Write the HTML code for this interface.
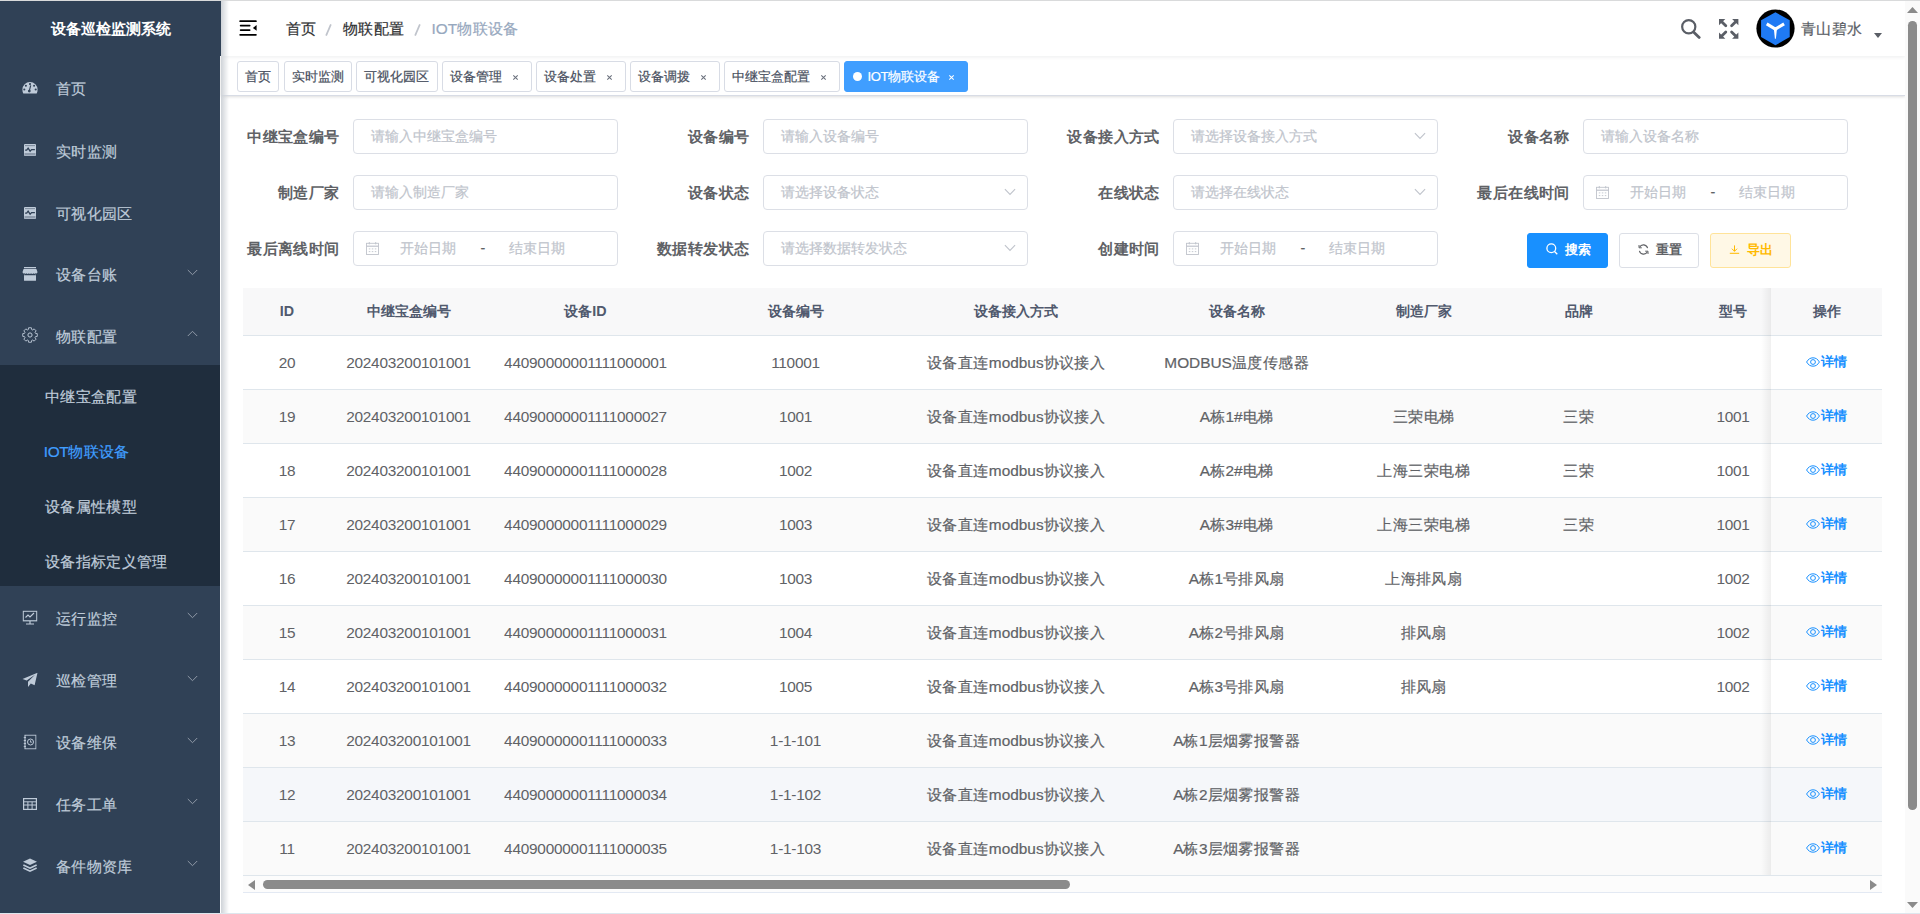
<!DOCTYPE html>
<html><head><meta charset="utf-8">
<style>
*{box-sizing:border-box;margin:0;padding:0}
html,body{width:1920px;height:914px;overflow:hidden;background:#fff;font-family:"Liberation Sans",sans-serif;-webkit-font-smoothing:antialiased}
.abs{position:absolute}
#topline{position:absolute;left:0;top:0;width:1920px;height:1px;background:#d9dadb;z-index:50}
#bottomline{position:absolute;left:0;top:913px;width:1920px;height:1px;background:#dde7ee;z-index:50}
#side{position:absolute;left:0;top:0;width:220px;height:913px;background:#304156;z-index:10;overflow:hidden}
#shadow{position:absolute;left:221px;top:0;width:8px;height:914px;background:linear-gradient(to right,#cfd3d8,rgba(255,255,255,0));z-index:9}
.logo{position:absolute;left:0;top:1px;width:221px;height:55px;line-height:55px;text-align:center;color:#fff;font-weight:bold;font-size:15.4px}
.mt{position:absolute;left:56px;height:61.6px;line-height:61.6px;font-size:15.4px;color:#bfcbd9;white-space:nowrap}
.ic{position:absolute;left:30px;width:0;height:0}
.ic svg{position:absolute;left:0;top:0;transform:translate(-50%,-50%);display:block}
.chev{position:absolute;left:186.5px}
.chev svg{display:block}
svg{display:block}
.subbg{position:absolute;left:0;width:220px;background:#1f2d3d}
.si{position:absolute;left:0;width:220px;height:55px;line-height:55px;padding-left:45px;font-size:15.4px;color:#bfcbd9}
.si.act{color:#409eff}
#navbar{position:absolute;left:221px;top:1px;width:1684px;height:55px;background:#fff;box-shadow:0 1px 4px rgba(0,21,41,.08);z-index:3}
.bc{position:absolute;top:0;line-height:56px;font-size:15.4px;color:#303133;white-space:nowrap}
.bc.sep{color:#c0c4cc;font-weight:bold}
.bc.last{color:#97a8be}
#tags{position:absolute;left:221px;top:56px;width:1684px;height:39.5px;background:#fff;border-bottom:1px solid #d8dce5;box-shadow:0 1px 3px 0 rgba(0,0,0,.12),0 0 3px 0 rgba(0,0,0,.04);z-index:2}
.tag{position:absolute;top:61.2px;height:30.5px;border:1px solid #d8dce5;border-radius:3px;background:#fff;color:#495060;font-size:13.2px;line-height:29.8px;padding-left:7.1px;white-space:nowrap;z-index:4}
.tag .x{position:absolute;font-size:11px;color:#495060}
.tag.act{background:#409eff;border-color:#409eff;color:#fff}
.lbl{position:absolute;font-size:15.4px;font-weight:bold;color:#606266;text-align:right;line-height:35px;white-space:nowrap;letter-spacing:0.4px}
.inp{position:absolute;height:35px;border:1px solid #dcdfe6;border-radius:4px;background:#fff}
.ph{position:absolute;top:0;line-height:33px;font-size:14.3px;color:#c0c4cc;white-space:nowrap}
.btn{position:absolute;top:233px;height:34.7px;border-radius:3px;font-size:13.2px;line-height:32.2px;white-space:nowrap;font-weight:bold}
#table{position:absolute;left:243px;top:288px;width:1639px;height:605px;overflow:hidden;background:#fff}
.thead{position:absolute;left:0;top:0;width:1639px;height:48.4px;background:#f8f8f9;border-bottom:1px solid #dfe6ec}
.th{position:absolute;top:0;height:47.4px;line-height:46px;text-align:center;font-size:14.3px;font-weight:bold;color:#515a6e;white-space:nowrap}
.tr{position:absolute;left:0;width:1639px;height:54px;border-bottom:1px solid #dfe6ec}
.td{position:absolute;top:0;height:53px;line-height:53px;text-align:center;font-size:15.4px;color:#606266;white-space:nowrap}
.td.dg{letter-spacing:-0.25px}
.td.cj,.mt,.si,.bc,.tag,.ph{-webkit-text-stroke:0.2px currentColor}
.mt,.si,.bc{letter-spacing:0.35px}
.td.cj{letter-spacing:0.45px;text-indent:0.45px}
.lt{letter-spacing:0}
.fx{position:absolute;left:1528.4px;top:0;width:110.6px;height:53px;line-height:52.6px;font-weight:bold;text-align:center;font-size:13.2px;color:#1890ff;white-space:nowrap}
.eye{display:inline-block;vertical-align:middle;margin-right:1px;position:relative;top:-0.8px}
.eye svg{display:block}
.fxh{position:absolute;left:1528.4px;top:0;width:110.6px;height:48.4px;line-height:46px;text-align:center;font-size:14.3px;font-weight:bold;color:#515a6e;background:#f8f8f9;border-bottom:1px solid #dfe6ec}
#fxshadow{position:absolute;left:1518.4px;top:0;width:10px;height:587.4px;background:linear-gradient(to right,rgba(0,0,0,0),rgba(0,0,0,.06))}
.hscroll{position:absolute;left:0;top:587.4px;width:1639px;height:18px;background:#fcfcfc;border-top:1px solid #dfe6ec;border-bottom:1px solid #e3e9f3}
#vscroll{position:absolute;left:1905px;top:1px;width:15px;height:912px;background:#fafafa;z-index:20}
</style></head><body>
<div id="topline"></div>
<div id="bottomline"></div>
<div id="side">
<div class="logo">设备巡检监测系统</div>
<div class="subbg" style="top:364.7px;height:221.1px"></div>
<div class="mt" style="top:58.0px">首页</div><div class="ic" style="top:87.5px"><svg width="16" height="13" viewBox="0 0 16 13"><path d="M8 0.5A7.6 7.6 0 0 0 0.4 8.1c0 1.6.3 2.8.9 3.9h13.4c.6-1.1.9-2.3.9-3.9A7.6 7.6 0 0 0 8 0.5z" fill="#bfcbd9"/><circle cx="8" cy="2.6" r="1.05" fill="#304156"/><circle cx="3.9" cy="4.2" r="1.05" fill="#304156"/><circle cx="12.1" cy="4.2" r="1.05" fill="#304156"/><circle cx="2.3" cy="8" r="1.05" fill="#304156"/><circle cx="13.7" cy="8" r="1.05" fill="#304156"/><path d="M8.7 3.8 L7.4 9" stroke="#304156" stroke-width="1.1"/><circle cx="7.3" cy="9.6" r="1.4" fill="#304156"/></svg></div>
<div class="mt" style="top:120.9px">实时监测</div><div class="ic" style="top:150.4px"><svg width="13" height="13" viewBox="0 0 13 13"><rect x="0.5" y="0.5" width="12" height="12" rx="1" fill="#bfcbd9"/><rect x="1.5" y="1.8" width="10" height="0.8" fill="#304156" opacity="0.6"/><path d="M1.6 6.6h1.6l1.4-2 2 3.1 1.5-1.7h3.3" stroke="#304156" stroke-width="1.25" fill="none"/><rect x="1" y="9.5" width="11" height="2.5" fill="#8d9aab"/></svg></div>
<div class="mt" style="top:183.0px">可视化园区</div><div class="ic" style="top:212.5px"><svg width="13" height="13" viewBox="0 0 13 13"><rect x="0.5" y="0.5" width="12" height="12" rx="1" fill="#bfcbd9"/><rect x="1.5" y="1.8" width="10" height="0.8" fill="#304156" opacity="0.6"/><path d="M1.6 6.6h1.6l1.4-2 2 3.1 1.5-1.7h3.3" stroke="#304156" stroke-width="1.25" fill="none"/><rect x="1" y="9.5" width="11" height="2.5" fill="#8d9aab"/></svg></div>
<div class="mt" style="top:244.3px">设备台账</div><div class="ic" style="top:273.8px"><svg width="16" height="14" viewBox="0 0 16 14"><rect x="2" y="0" width="12" height="1.3" fill="#bfcbd9"/><path d="M1.6 1.9H14.4L15.4 4.8V5.4Q14.9 7 13.4 6.2 12.6 7.4 11.3 6.2 10.4 7.6 9 6.2 8 7.6 6.9 6.2 5.6 7.6 4.7 6.2 3.4 7.4 2.6 6.2 1.1 7 0.6 5.4V4.8z" fill="#bfcbd9"/><path d="M2 8.2H14V13.2Q14 13.8 13.4 13.8H2.6Q2 13.8 2 13.2z" fill="#bfcbd9"/><path d="M2 8.2L2 7.4 3 7.9z M14 8.2L14 7.4 13 7.9z" fill="#bfcbd9"/></svg></div><div class="chev" style="top:268.5px"><svg width="11" height="7" viewBox="0 0 11 7"><path d="M0.8 1L5.5 5.7 10.2 1" fill="none" stroke="#909aa8" stroke-width="1"/></svg></div>
<div class="mt" style="top:306.2px">物联配置</div><div class="ic" style="top:334.7px"><svg width="16" height="16" viewBox="0 0 16 16"><path d="M13.45 6.33 L15.26 6.59 L15.26 9.41 L13.45 9.67 L13.03 10.68 L14.13 12.14 L12.14 14.13 L10.68 13.03 L9.67 13.45 L9.41 15.26 L6.59 15.26 L6.33 13.45 L5.32 13.03 L3.86 14.13 L1.87 12.14 L2.97 10.68 L2.55 9.67 L0.74 9.41 L0.74 6.59 L2.55 6.33 L2.97 5.32 L1.87 3.86 L3.86 1.87 L5.32 2.97 L6.33 2.55 L6.59 0.74 L9.41 0.74 L9.67 2.55 L10.68 2.97 L12.14 1.87 L14.13 3.86 L13.03 5.32z" fill="none" stroke="#bfcbd9" stroke-width="0.9" stroke-linejoin="round"/><circle cx="8" cy="8" r="2.1" fill="none" stroke="#bfcbd9" stroke-width="1"/></svg></div><div class="chev" style="top:330.4px"><svg width="11" height="7" viewBox="0 0 11 7"><path d="M0.8 6L5.5 1.3 10.2 6" fill="none" stroke="#909aa8" stroke-width="1"/></svg></div>
<div class="si" style="top:369.1px">中继宝盒配置</div>
<div class="si act" style="top:424.1px;padding-left:43.8px"><span class="lt" style="letter-spacing:-0.4px">IOT</span>物联设备</div>
<div class="si" style="top:479.0px">设备属性模型</div>
<div class="si" style="top:534.0px">设备指标定义管理</div>
<div class="mt" style="top:588.2px">运行监控</div><div class="ic" style="top:617.7px"><svg width="15" height="15" viewBox="0 0 15 15"><rect x="0.7" y="0.7" width="13.6" height="9.6" fill="none" stroke="#bfcbd9" stroke-width="1.2"/><path d="M3 7l2.5-2.5 2 2 4-4" stroke="#bfcbd9" stroke-width="1.1" fill="none"/><path d="M7.5 10.5v2.5M3.5 13.5h8" stroke="#bfcbd9" stroke-width="1.2"/></svg></div><div class="chev" style="top:612.4px"><svg width="11" height="7" viewBox="0 0 11 7"><path d="M0.8 1L5.5 5.7 10.2 1" fill="none" stroke="#909aa8" stroke-width="1"/></svg></div>
<div class="mt" style="top:650.3px">巡检管理</div><div class="ic" style="top:679.8px"><svg width="16" height="15" viewBox="0 0 16 15"><path d="M15.5 0.3L0.5 6.5l4.2 1.6L13 2.2 6 9.2v5.3l2.8-3.6 3.8 1.9z" fill="#bfcbd9"/></svg></div><div class="chev" style="top:674.5px"><svg width="11" height="7" viewBox="0 0 11 7"><path d="M0.8 1L5.5 5.7 10.2 1" fill="none" stroke="#909aa8" stroke-width="1"/></svg></div>
<div class="mt" style="top:712.4px">设备维保</div><div class="ic" style="top:741.9px"><svg width="13" height="15" viewBox="0 0 13 15"><rect x="1.5" y="0.6" width="11" height="13.8" fill="none" stroke="#bfcbd9" stroke-width="1.1"/><circle cx="7" cy="7.5" r="3" fill="none" stroke="#bfcbd9" stroke-width="1"/><path d="M7 5.8v1.9h1.4" stroke="#bfcbd9" stroke-width="0.9" fill="none"/><path d="M0 3h2.5M0 6h2.5M0 9h2.5M0 12h2.5" stroke="#bfcbd9" stroke-width="0.9"/></svg></div><div class="chev" style="top:736.6px"><svg width="11" height="7" viewBox="0 0 11 7"><path d="M0.8 1L5.5 5.7 10.2 1" fill="none" stroke="#909aa8" stroke-width="1"/></svg></div>
<div class="mt" style="top:774.1px">任务工单</div><div class="ic" style="top:803.6px"><svg width="14" height="12" viewBox="0 0 14 12"><rect x="0.6" y="0.6" width="12.8" height="10.8" fill="none" stroke="#bfcbd9" stroke-width="1.2"/><path d="M0.6 3.8h12.8M0.6 7h12.8M4.9 3.8v7.6M9.1 3.8v7.6" stroke="#bfcbd9" stroke-width="1"/></svg></div><div class="chev" style="top:798.3px"><svg width="11" height="7" viewBox="0 0 11 7"><path d="M0.8 1L5.5 5.7 10.2 1" fill="none" stroke="#909aa8" stroke-width="1"/></svg></div>
<div class="mt" style="top:835.5px">备件物资库</div><div class="ic" style="top:865.0px"><svg width="15" height="14" viewBox="0 0 15 14"><path d="M7.5 0.5L14.5 3.8 7.5 7.1 0.5 3.8z" fill="#bfcbd9"/><path d="M1.2 6.3l6.3 3 6.3-3 0.7 1.4-7 3.3-7-3.3z" fill="#bfcbd9"/><path d="M1.2 9.3l6.3 3 6.3-3 0.7 1.4-7 3.3-7-3.3z" fill="#bfcbd9"/></svg></div><div class="chev" style="top:859.7px"><svg width="11" height="7" viewBox="0 0 11 7"><path d="M0.8 1L5.5 5.7 10.2 1" fill="none" stroke="#909aa8" stroke-width="1"/></svg></div>
</div>
<div id="shadow"></div>
<div class="abs" style="left:220px;top:1px;width:1px;height:55px;background:#304156;z-index:11"></div>

<div id="navbar">
 <svg class="abs" style="left:18px;top:19px" width="18" height="17" viewBox="0 0 18 17"><rect x="0.3" y="0.3" width="17.5" height="1.75" rx="0.85" fill="#000"/><rect x="0.8" y="4.85" width="10.7" height="1.55" rx="0.75" fill="#000"/><rect x="0.8" y="9.35" width="10.7" height="1.55" rx="0.75" fill="#000"/><rect x="0.3" y="13.9" width="17.5" height="1.8" rx="0.9" fill="#000"/><path d="M17.6 5.1L13.9 7.95 17.6 10.8z" fill="#000"/></svg>
 <span class="bc" style="left:65px">首页</span>
 <svg class="abs" style="left:104.3px;top:22.8px" width="7" height="12" viewBox="0 0 7 12"><path d="M1.1 11.6L5.9 0.4" stroke="#c0c4cc" stroke-width="1.7"/></svg>
 <span class="bc" style="left:122px">物联配置</span>
 <svg class="abs" style="left:193.4px;top:22.8px" width="7" height="12" viewBox="0 0 7 12"><path d="M1.1 11.6L5.9 0.4" stroke="#c0c4cc" stroke-width="1.7"/></svg>
 <span class="bc last" style="left:210.6px"><span class="lt">IOT</span>物联设备</span>
 <svg class="abs" style="left:1459px;top:17.1px" width="21" height="21" viewBox="0 0 21 21"><circle cx="8.75" cy="8.75" r="6.6" fill="none" stroke="#5a5e66" stroke-width="2.2"/><path d="M13.8 14.2L19.2 19.4" stroke="#5a5e66" stroke-width="2.8" stroke-linecap="round"/></svg>
 <svg class="abs" style="left:1497.9px;top:18px" width="20" height="20" viewBox="0 0 20 20" fill="#5a5e66" stroke="#5a5e66"><path d="M0 0H6.3L0 6.3z" stroke="none"/><path d="M2.2 2.2L6.8 6.8" stroke-width="2.8" stroke-linecap="round"/><path d="M19.4 0H13.1L19.4 6.3z" stroke="none"/><path d="M17.2 2.2L12.6 6.8" stroke-width="2.8" stroke-linecap="round"/><path d="M0 19.8H6.3L0 13.5z" stroke="none"/><path d="M2.2 17.6L6.8 13" stroke-width="2.8" stroke-linecap="round"/><path d="M19.4 19.8H13.1L19.4 13.5z" stroke="none"/><path d="M17.2 17.6L12.6 13" stroke-width="2.8" stroke-linecap="round"/></svg>
 <svg class="abs" style="left:1535px;top:7.6px" width="39" height="39" viewBox="0 0 40 40"><circle cx="20" cy="20" r="19.6" fill="#000"/><path d="M19.9 3.3L34.6 11.6V28.8L19.9 37.3 5.2 28.8V11.6z" fill="#1f7af4"/><path d="M11 15.2L19.9 20.6 28.8 15.2" fill="none" stroke="#fff" stroke-width="3.2" stroke-linejoin="round"/><path d="M18.3 20.2h3.2L20.4 30.6h-1z" fill="#fff"/></svg>
 <span class="bc" style="left:1580px;color:#5a5e66">青山碧水</span>
 <svg class="abs" style="left:1652.5px;top:32px" width="8" height="5" viewBox="0 0 8 5"><path d="M0 0h8L4 5z" fill="#5a5e66"/></svg>
</div>

<div id="tags"></div>
<div class="tag" style="left:237px;width:42px">首页</div>
<div class="tag" style="left:284px;width:68px">实时监测</div>
<div class="tag" style="left:356px;width:82px">可视化园区</div>
<div class="tag" style="left:442px;width:90px">设备管理<svg class="abs" style="left:69.2px;top:12.3px" width="7" height="7" viewBox="0 0 7 7"><path d="M1.3 1.3L5.7 5.7M5.7 1.3L1.3 5.7" stroke="#6a707c" stroke-width="1.05"/></svg></div>
<div class="tag" style="left:536px;width:90px">设备处置<svg class="abs" style="left:69.2px;top:12.3px" width="7" height="7" viewBox="0 0 7 7"><path d="M1.3 1.3L5.7 5.7M5.7 1.3L1.3 5.7" stroke="#6a707c" stroke-width="1.05"/></svg></div>
<div class="tag" style="left:630px;width:90px">设备调拨<svg class="abs" style="left:69.2px;top:12.3px" width="7" height="7" viewBox="0 0 7 7"><path d="M1.3 1.3L5.7 5.7M5.7 1.3L1.3 5.7" stroke="#6a707c" stroke-width="1.05"/></svg></div>
<div class="tag" style="left:724px;width:116px">中继宝盒配置<svg class="abs" style="left:95.1px;top:12.3px" width="7" height="7" viewBox="0 0 7 7"><path d="M1.3 1.3L5.7 5.7M5.7 1.3L1.3 5.7" stroke="#6a707c" stroke-width="1.05"/></svg></div>
<div class="tag act" style="left:844px;width:124px;padding-left:22.5px"><span class="abs" style="left:7.5px;top:10px;width:9px;height:9px;border-radius:50%;background:#fff"></span><span style="letter-spacing:-0.5px">IOT</span>物联设备<svg class="abs" style="left:103.3px;top:12.3px" width="7" height="7" viewBox="0 0 7 7"><path d="M1.3 1.3L5.7 5.7M5.7 1.3L1.3 5.7" stroke="#fff" stroke-width="1.05"/></svg></div>

<!-- form -->
<div class="lbl" style="left:199.7px;width:140px;top:119px">中继宝盒编号</div>
<div class="inp" style="left:353px;top:119px;width:265px"><span class="ph" style="left:17px">请输入中继宝盒编号</span></div>
<div class="lbl" style="left:609.4px;width:140px;top:119px">设备编号</div>
<div class="inp" style="left:763px;top:119px;width:265px"><span class="ph" style="left:17px">请输入设备编号</span></div>
<div class="lbl" style="left:1019.9000000000001px;width:140px;top:119px">设备接入方式</div>
<div class="inp" style="left:1173px;top:119px;width:265px"><span class="ph" style="left:17px">请选择设备接入方式</span><span class="abs" style="left:240px;top:11.6px"><svg width="12" height="8" viewBox="0 0 12 8"><path d="M0.9 1.1L6 6.4 11.1 1.1" fill="none" stroke="#c0c4cc" stroke-width="1.1"/></svg></span></div>
<div class="lbl" style="left:1429.9px;width:140px;top:119px">设备名称</div>
<div class="inp" style="left:1583px;top:119px;width:265px"><span class="ph" style="left:17px">请输入设备名称</span></div>
<div class="lbl" style="left:199.7px;width:140px;top:175px">制造厂家</div>
<div class="inp" style="left:353px;top:175px;width:265px"><span class="ph" style="left:17px">请输入制造厂家</span></div>
<div class="lbl" style="left:609.4px;width:140px;top:175px">设备状态</div>
<div class="inp" style="left:763px;top:175px;width:265px"><span class="ph" style="left:17px">请选择设备状态</span><span class="abs" style="left:240px;top:11.6px"><svg width="12" height="8" viewBox="0 0 12 8"><path d="M0.9 1.1L6 6.4 11.1 1.1" fill="none" stroke="#c0c4cc" stroke-width="1.1"/></svg></span></div>
<div class="lbl" style="left:1019.9000000000001px;width:140px;top:175px">在线状态</div>
<div class="inp" style="left:1173px;top:175px;width:265px"><span class="ph" style="left:17px">请选择在线状态</span><span class="abs" style="left:240px;top:11.6px"><svg width="12" height="8" viewBox="0 0 12 8"><path d="M0.9 1.1L6 6.4 11.1 1.1" fill="none" stroke="#c0c4cc" stroke-width="1.1"/></svg></span></div>
<div class="lbl" style="left:1429.9px;width:140px;top:175px">最后在线时间</div>
<div class="inp" style="left:1583px;top:175px;width:265px"><span class="abs" style="left:11.8px;top:10px"><svg width="13" height="13" viewBox="0 0 13 13"><rect x="0.5" y="1.3" width="12" height="11.2" fill="none" stroke="#c0c4cc" stroke-width="0.9"/><rect x="0.5" y="3.6" width="12" height="1.2" fill="#c0c4cc"/><path d="M3.3 0v2.4M9.7 0v2.4" stroke="#c0c4cc" stroke-width="0.9"/><path d="M2.8 6.9h1.5M5.8 6.9h1.5M8.8 6.9h1.5M2.8 9.6h1.5M5.8 9.6h1.5M8.8 9.6h1.5" stroke="#c0c4cc" stroke-width="0.9"/></svg></span><span class="ph" style="left:46px">开始日期</span><span class="ph" style="left:126.5px;color:#606266">-</span><span class="ph" style="left:154.5px">结束日期</span></div>
<div class="lbl" style="left:199.7px;width:140px;top:231px">最后离线时间</div>
<div class="inp" style="left:353px;top:231px;width:265px"><span class="abs" style="left:11.8px;top:10px"><svg width="13" height="13" viewBox="0 0 13 13"><rect x="0.5" y="1.3" width="12" height="11.2" fill="none" stroke="#c0c4cc" stroke-width="0.9"/><rect x="0.5" y="3.6" width="12" height="1.2" fill="#c0c4cc"/><path d="M3.3 0v2.4M9.7 0v2.4" stroke="#c0c4cc" stroke-width="0.9"/><path d="M2.8 6.9h1.5M5.8 6.9h1.5M8.8 6.9h1.5M2.8 9.6h1.5M5.8 9.6h1.5M8.8 9.6h1.5" stroke="#c0c4cc" stroke-width="0.9"/></svg></span><span class="ph" style="left:46px">开始日期</span><span class="ph" style="left:126.5px;color:#606266">-</span><span class="ph" style="left:154.5px">结束日期</span></div>
<div class="lbl" style="left:609.4px;width:140px;top:231px">数据转发状态</div>
<div class="inp" style="left:763px;top:231px;width:265px"><span class="ph" style="left:17px">请选择数据转发状态</span><span class="abs" style="left:240px;top:11.6px"><svg width="12" height="8" viewBox="0 0 12 8"><path d="M0.9 1.1L6 6.4 11.1 1.1" fill="none" stroke="#c0c4cc" stroke-width="1.1"/></svg></span></div>
<div class="lbl" style="left:1019.9000000000001px;width:140px;top:231px">创建时间</div>
<div class="inp" style="left:1173px;top:231px;width:265px"><span class="abs" style="left:11.8px;top:10px"><svg width="13" height="13" viewBox="0 0 13 13"><rect x="0.5" y="1.3" width="12" height="11.2" fill="none" stroke="#c0c4cc" stroke-width="0.9"/><rect x="0.5" y="3.6" width="12" height="1.2" fill="#c0c4cc"/><path d="M3.3 0v2.4M9.7 0v2.4" stroke="#c0c4cc" stroke-width="0.9"/><path d="M2.8 6.9h1.5M5.8 6.9h1.5M8.8 6.9h1.5M2.8 9.6h1.5M5.8 9.6h1.5M8.8 9.6h1.5" stroke="#c0c4cc" stroke-width="0.9"/></svg></span><span class="ph" style="left:46px">开始日期</span><span class="ph" style="left:126.5px;color:#606266">-</span><span class="ph" style="left:154.5px">结束日期</span></div>
<div class="btn" style="left:1527.2px;width:80.8px;background:#1890ff;border:1px solid #1890ff;color:#fff"><span class="abs" style="left:17.5px;top:9.2px"><svg width="12" height="12" viewBox="0 0 12 12"><circle cx="5.3" cy="5.3" r="4.4" fill="none" stroke="#fff" stroke-width="1.3"/><path d="M8.5 8.5L11.3 11.3" stroke="#fff" stroke-width="1.3"/></svg></span><span class="abs" style="left:36.5px;top:0">搜索</span></div>
<div class="btn" style="left:1619.4px;width:79.4px;background:#fff;border:1px solid #dcdfe6;color:#606266"><span class="abs" style="left:17.5px;top:9.8px"><svg width="11" height="11" viewBox="0 0 11 11"><path d="M9.6 4.2A4.3 4.3 0 0 0 1.6 3.2M1.4 6.8A4.3 4.3 0 0 0 9.4 7.8" fill="none" stroke="#606266" stroke-width="1.1"/><path d="M1 1v2.8h2.8" fill="none" stroke="#606266" stroke-width="1"/><path d="M10 10V7.2H7.2" fill="none" stroke="#606266" stroke-width="1"/></svg></span><span class="abs" style="left:35.5px;top:0">重置</span></div>
<div class="btn" style="left:1710.3px;width:80.5px;background:#fff8e6;border:1px solid #ffe399;color:#ffba00"><span class="abs" style="left:17.3px;top:10.6px"><svg width="11" height="10" viewBox="0 0 11 10"><path d="M5.5 0.4v5.9M2.9 3.7l2.6 2.6 2.6-2.6" fill="none" stroke="#ffba00" stroke-width="1"/><path d="M0.8 8.3h9.4" stroke="#ffba00" stroke-width="1"/></svg></span><span class="abs" style="left:36px;top:0">导出</span></div>

<div id="table">
 <div class="thead"><div class="th" style="left:0px;width:88px">ID</div><div class="th" style="left:88px;width:155px">中继宝盒编号</div><div class="th" style="left:243px;width:199px">设备ID</div><div class="th" style="left:442px;width:221px">设备编号</div><div class="th" style="left:663px;width:220px">设备接入方式</div><div class="th" style="left:883px;width:221px">设备名称</div><div class="th" style="left:1104px;width:153px">制造厂家</div><div class="th" style="left:1257px;width:157px">品牌</div><div class="th" style="left:1414px;width:152px">型号</div></div>
 <div class="tr" style="top:48.4px;background:#ffffff"><div class="td dg" style="left:0px;width:88px">20</div><div class="td dg" style="left:88px;width:155px">202403200101001</div><div class="td dg" style="left:243px;width:199px">44090000001111000001</div><div class="td dg" style="left:442px;width:221px">110001</div><div class="td cj" style="left:663px;width:220px">设备直连<span class="lt">modbus</span>协议接入</div><div class="td cj" style="left:883px;width:221px"><span class="lt">MODBUS</span>温度传感器</div><div class="td cj" style="left:1104px;width:153px"></div><div class="td cj" style="left:1257px;width:157px"></div><div class="td cj" style="left:1414px;width:152px"></div><div class="fx" style="background:#ffffff"><span class="eye"><svg width="14" height="10" viewBox="0 0 14 10"><path d="M0.6 5C2.2 2.2 4.3 0.8 7 0.8S11.8 2.2 13.4 5C11.8 7.8 9.7 9.2 7 9.2S2.2 7.8 0.6 5z" fill="none" stroke="#1890ff" stroke-width="1"/><circle cx="7" cy="5" r="2.4" fill="none" stroke="#1890ff" stroke-width="1"/></svg></span>详情</div></div>
<div class="tr" style="top:102.4px;background:#fafafa"><div class="td dg" style="left:0px;width:88px">19</div><div class="td dg" style="left:88px;width:155px">202403200101001</div><div class="td dg" style="left:243px;width:199px">44090000001111000027</div><div class="td dg" style="left:442px;width:221px">1001</div><div class="td cj" style="left:663px;width:220px">设备直连<span class="lt">modbus</span>协议接入</div><div class="td cj" style="left:883px;width:221px"><span class="lt">A</span>栋<span class="lt">1#</span>电梯</div><div class="td cj" style="left:1104px;width:153px">三荣电梯</div><div class="td cj" style="left:1257px;width:157px">三荣</div><div class="td dg" style="left:1414px;width:152px">1001</div><div class="fx" style="background:#fafafa"><span class="eye"><svg width="14" height="10" viewBox="0 0 14 10"><path d="M0.6 5C2.2 2.2 4.3 0.8 7 0.8S11.8 2.2 13.4 5C11.8 7.8 9.7 9.2 7 9.2S2.2 7.8 0.6 5z" fill="none" stroke="#1890ff" stroke-width="1"/><circle cx="7" cy="5" r="2.4" fill="none" stroke="#1890ff" stroke-width="1"/></svg></span>详情</div></div>
<div class="tr" style="top:156.4px;background:#ffffff"><div class="td dg" style="left:0px;width:88px">18</div><div class="td dg" style="left:88px;width:155px">202403200101001</div><div class="td dg" style="left:243px;width:199px">44090000001111000028</div><div class="td dg" style="left:442px;width:221px">1002</div><div class="td cj" style="left:663px;width:220px">设备直连<span class="lt">modbus</span>协议接入</div><div class="td cj" style="left:883px;width:221px"><span class="lt">A</span>栋<span class="lt">2#</span>电梯</div><div class="td cj" style="left:1104px;width:153px">上海三荣电梯</div><div class="td cj" style="left:1257px;width:157px">三荣</div><div class="td dg" style="left:1414px;width:152px">1001</div><div class="fx" style="background:#ffffff"><span class="eye"><svg width="14" height="10" viewBox="0 0 14 10"><path d="M0.6 5C2.2 2.2 4.3 0.8 7 0.8S11.8 2.2 13.4 5C11.8 7.8 9.7 9.2 7 9.2S2.2 7.8 0.6 5z" fill="none" stroke="#1890ff" stroke-width="1"/><circle cx="7" cy="5" r="2.4" fill="none" stroke="#1890ff" stroke-width="1"/></svg></span>详情</div></div>
<div class="tr" style="top:210.4px;background:#fafafa"><div class="td dg" style="left:0px;width:88px">17</div><div class="td dg" style="left:88px;width:155px">202403200101001</div><div class="td dg" style="left:243px;width:199px">44090000001111000029</div><div class="td dg" style="left:442px;width:221px">1003</div><div class="td cj" style="left:663px;width:220px">设备直连<span class="lt">modbus</span>协议接入</div><div class="td cj" style="left:883px;width:221px"><span class="lt">A</span>栋<span class="lt">3#</span>电梯</div><div class="td cj" style="left:1104px;width:153px">上海三荣电梯</div><div class="td cj" style="left:1257px;width:157px">三荣</div><div class="td dg" style="left:1414px;width:152px">1001</div><div class="fx" style="background:#fafafa"><span class="eye"><svg width="14" height="10" viewBox="0 0 14 10"><path d="M0.6 5C2.2 2.2 4.3 0.8 7 0.8S11.8 2.2 13.4 5C11.8 7.8 9.7 9.2 7 9.2S2.2 7.8 0.6 5z" fill="none" stroke="#1890ff" stroke-width="1"/><circle cx="7" cy="5" r="2.4" fill="none" stroke="#1890ff" stroke-width="1"/></svg></span>详情</div></div>
<div class="tr" style="top:264.4px;background:#ffffff"><div class="td dg" style="left:0px;width:88px">16</div><div class="td dg" style="left:88px;width:155px">202403200101001</div><div class="td dg" style="left:243px;width:199px">44090000001111000030</div><div class="td dg" style="left:442px;width:221px">1003</div><div class="td cj" style="left:663px;width:220px">设备直连<span class="lt">modbus</span>协议接入</div><div class="td cj" style="left:883px;width:221px"><span class="lt">A</span>栋<span class="lt">1</span>号排风扇</div><div class="td cj" style="left:1104px;width:153px">上海排风扇</div><div class="td cj" style="left:1257px;width:157px"></div><div class="td dg" style="left:1414px;width:152px">1002</div><div class="fx" style="background:#ffffff"><span class="eye"><svg width="14" height="10" viewBox="0 0 14 10"><path d="M0.6 5C2.2 2.2 4.3 0.8 7 0.8S11.8 2.2 13.4 5C11.8 7.8 9.7 9.2 7 9.2S2.2 7.8 0.6 5z" fill="none" stroke="#1890ff" stroke-width="1"/><circle cx="7" cy="5" r="2.4" fill="none" stroke="#1890ff" stroke-width="1"/></svg></span>详情</div></div>
<div class="tr" style="top:318.4px;background:#fafafa"><div class="td dg" style="left:0px;width:88px">15</div><div class="td dg" style="left:88px;width:155px">202403200101001</div><div class="td dg" style="left:243px;width:199px">44090000001111000031</div><div class="td dg" style="left:442px;width:221px">1004</div><div class="td cj" style="left:663px;width:220px">设备直连<span class="lt">modbus</span>协议接入</div><div class="td cj" style="left:883px;width:221px"><span class="lt">A</span>栋<span class="lt">2</span>号排风扇</div><div class="td cj" style="left:1104px;width:153px">排风扇</div><div class="td cj" style="left:1257px;width:157px"></div><div class="td dg" style="left:1414px;width:152px">1002</div><div class="fx" style="background:#fafafa"><span class="eye"><svg width="14" height="10" viewBox="0 0 14 10"><path d="M0.6 5C2.2 2.2 4.3 0.8 7 0.8S11.8 2.2 13.4 5C11.8 7.8 9.7 9.2 7 9.2S2.2 7.8 0.6 5z" fill="none" stroke="#1890ff" stroke-width="1"/><circle cx="7" cy="5" r="2.4" fill="none" stroke="#1890ff" stroke-width="1"/></svg></span>详情</div></div>
<div class="tr" style="top:372.4px;background:#ffffff"><div class="td dg" style="left:0px;width:88px">14</div><div class="td dg" style="left:88px;width:155px">202403200101001</div><div class="td dg" style="left:243px;width:199px">44090000001111000032</div><div class="td dg" style="left:442px;width:221px">1005</div><div class="td cj" style="left:663px;width:220px">设备直连<span class="lt">modbus</span>协议接入</div><div class="td cj" style="left:883px;width:221px"><span class="lt">A</span>栋<span class="lt">3</span>号排风扇</div><div class="td cj" style="left:1104px;width:153px">排风扇</div><div class="td cj" style="left:1257px;width:157px"></div><div class="td dg" style="left:1414px;width:152px">1002</div><div class="fx" style="background:#ffffff"><span class="eye"><svg width="14" height="10" viewBox="0 0 14 10"><path d="M0.6 5C2.2 2.2 4.3 0.8 7 0.8S11.8 2.2 13.4 5C11.8 7.8 9.7 9.2 7 9.2S2.2 7.8 0.6 5z" fill="none" stroke="#1890ff" stroke-width="1"/><circle cx="7" cy="5" r="2.4" fill="none" stroke="#1890ff" stroke-width="1"/></svg></span>详情</div></div>
<div class="tr" style="top:426.4px;background:#fafafa"><div class="td dg" style="left:0px;width:88px">13</div><div class="td dg" style="left:88px;width:155px">202403200101001</div><div class="td dg" style="left:243px;width:199px">44090000001111000033</div><div class="td dg" style="left:442px;width:221px">1-1-101</div><div class="td cj" style="left:663px;width:220px">设备直连<span class="lt">modbus</span>协议接入</div><div class="td cj" style="left:883px;width:221px"><span class="lt">A</span>栋<span class="lt">1</span>层烟雾报警器</div><div class="td cj" style="left:1104px;width:153px"></div><div class="td cj" style="left:1257px;width:157px"></div><div class="td cj" style="left:1414px;width:152px"></div><div class="fx" style="background:#fafafa"><span class="eye"><svg width="14" height="10" viewBox="0 0 14 10"><path d="M0.6 5C2.2 2.2 4.3 0.8 7 0.8S11.8 2.2 13.4 5C11.8 7.8 9.7 9.2 7 9.2S2.2 7.8 0.6 5z" fill="none" stroke="#1890ff" stroke-width="1"/><circle cx="7" cy="5" r="2.4" fill="none" stroke="#1890ff" stroke-width="1"/></svg></span>详情</div></div>
<div class="tr" style="top:480.4px;background:#f5f7fa"><div class="td dg" style="left:0px;width:88px">12</div><div class="td dg" style="left:88px;width:155px">202403200101001</div><div class="td dg" style="left:243px;width:199px">44090000001111000034</div><div class="td dg" style="left:442px;width:221px">1-1-102</div><div class="td cj" style="left:663px;width:220px">设备直连<span class="lt">modbus</span>协议接入</div><div class="td cj" style="left:883px;width:221px"><span class="lt">A</span>栋<span class="lt">2</span>层烟雾报警器</div><div class="td cj" style="left:1104px;width:153px"></div><div class="td cj" style="left:1257px;width:157px"></div><div class="td cj" style="left:1414px;width:152px"></div><div class="fx" style="background:#f5f7fa"><span class="eye"><svg width="14" height="10" viewBox="0 0 14 10"><path d="M0.6 5C2.2 2.2 4.3 0.8 7 0.8S11.8 2.2 13.4 5C11.8 7.8 9.7 9.2 7 9.2S2.2 7.8 0.6 5z" fill="none" stroke="#1890ff" stroke-width="1"/><circle cx="7" cy="5" r="2.4" fill="none" stroke="#1890ff" stroke-width="1"/></svg></span>详情</div></div>
<div class="tr" style="top:534.4px;background:#fafafa"><div class="td dg" style="left:0px;width:88px">11</div><div class="td dg" style="left:88px;width:155px">202403200101001</div><div class="td dg" style="left:243px;width:199px">44090000001111000035</div><div class="td dg" style="left:442px;width:221px">1-1-103</div><div class="td cj" style="left:663px;width:220px">设备直连<span class="lt">modbus</span>协议接入</div><div class="td cj" style="left:883px;width:221px"><span class="lt">A</span>栋<span class="lt">3</span>层烟雾报警器</div><div class="td cj" style="left:1104px;width:153px"></div><div class="td cj" style="left:1257px;width:157px"></div><div class="td cj" style="left:1414px;width:152px"></div><div class="fx" style="background:#fafafa"><span class="eye"><svg width="14" height="10" viewBox="0 0 14 10"><path d="M0.6 5C2.2 2.2 4.3 0.8 7 0.8S11.8 2.2 13.4 5C11.8 7.8 9.7 9.2 7 9.2S2.2 7.8 0.6 5z" fill="none" stroke="#1890ff" stroke-width="1"/><circle cx="7" cy="5" r="2.4" fill="none" stroke="#1890ff" stroke-width="1"/></svg></span>详情</div></div>
 <div id="fxshadow"></div>
 <div class="fxh">操作</div>
 <div class="hscroll">
  <svg class="abs" style="left:4.6px;top:3.5px" width="7" height="10" viewBox="0 0 7 10"><path d="M7 0V10L0 5z" fill="#8a8a8a"/></svg>
  <div class="abs" style="left:20px;top:3.7px;width:807px;height:9px;border-radius:4.5px;background:#8b8b8b"></div>
  <svg class="abs" style="left:1627px;top:3.5px" width="7" height="10" viewBox="0 0 7 10"><path d="M0 0V10L7 5z" fill="#8a8a8a"/></svg>
 </div>
</div>

<div id="vscroll">
 <svg class="abs" style="left:2px;top:5.8px" width="11" height="7" viewBox="0 0 11 7"><path d="M5.5 0L11 6H0z" fill="#8a8a8a"/></svg>
 <div class="abs" style="left:3.2px;top:20px;width:8.6px;height:789px;border-radius:4.3px;background:#8b8b8b"></div>
 <svg class="abs" style="left:2px;top:901px" width="11" height="7" viewBox="0 0 11 7"><path d="M0 0H11L5.5 6z" fill="#8a8a8a"/></svg>
</div>
</body></html>
